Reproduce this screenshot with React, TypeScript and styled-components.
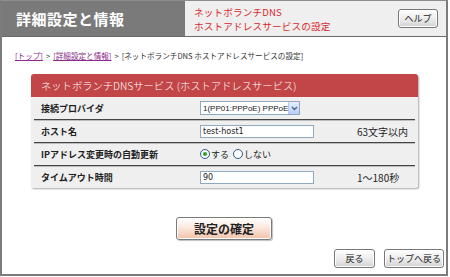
import React from 'react';
import styled, { createGlobalStyle } from 'styled-components';

const GlobalStyle = createGlobalStyle`
  html, body {
    margin: 0;
    padding: 0;
    background: #ffffff;
  }
  body {
    font-family: "Noto Sans CJK JP", "Noto Sans", sans-serif;
    color: #222;
  }
`;

const Frame = styled.div`
  box-sizing: border-box;
  width: 448px;
  height: 276px;
  border: 2px solid #7c7c7c;
  border-top: 1px solid #8c8c8c;
  display: flex;
  flex-direction: column;
  background: #fff;
`;

const Header = styled.div`
  display: flex;
  height: 35px;
  border-bottom: 1px solid #6a6a6a;
`;

const TitleBlock = styled.div`
  width: 183px;
  background: #7a7a7a;
  color: #fff;
  font-size: 15px;
  font-weight: bold;
  display: flex;
  align-items: center;
  padding-left: 14px;
  box-sizing: border-box;
  letter-spacing: 0.5px;
`;

const SubTitleBlock = styled.div`
  flex: 1;
  background: #efefef;
  display: flex;
  align-items: center;
  justify-content: space-between;
  padding: 0 8px 0 9px;
`;

const SubTitle = styled.div`
  color: #d8282c;
  font-size: 9.6px;
  letter-spacing: 0.15px;
  display: flex;
  flex-direction: column;
`;

const SubTitleLine = styled.span`
  line-height: 14px;
`;

const GrayButton = styled.button<{ $w: number }>`
  width: ${p => p.$w}px;
  height: 19px;
  padding: 0;
  border: 1px solid #777;
  border-radius: 3px;
  background: linear-gradient(#ffffff, #e4e4e4 70%, #cfcfcf);
  box-shadow: inset 0 0 0 1px #fff;
  font-family: "Noto Sans CJK JP", sans-serif;
  font-size: 9px;
  white-space: nowrap;
  color: #222;
  display: flex;
  align-items: center;
  justify-content: center;
`;

const Breadcrumb = styled.div`
  height: 37px;
  display: flex;
  align-items: center;
  padding-left: 13px;
  font-size: 7.6px;
  color: #333;
  gap: 3px;
  white-space: nowrap;
`;

const Crumb = styled.a`
  color: #8a2a8a;
  text-decoration: underline;
`;

const Panel = styled.div`
  margin-left: 29px;
  width: 387px;
  background: #efefef;
  border-radius: 3px 3px 2px 2px;
  box-shadow: 1px 1px 2px rgba(0, 0, 0, 0.35);
  overflow: hidden;
`;

const PanelHead = styled.div`
  height: 23px;
  background: #c24548;
  color: #fff;
  font-size: 10.3px;
  font-weight: 300;
  display: flex;
  align-items: center;
  padding-left: 10px;
`;

const Row = styled.div<{ $last?: boolean }>`
  display: grid;
  grid-template-columns: 166px 157px 1fr;
  align-items: center;
  height: 22px;
  border-bottom: ${p => (p.$last ? 'none' : '1px solid #444')};
  box-shadow: ${p => (p.$last ? 'none' : '0 1px 0 #bdbdbd')};
  margin: 0 3px;
`;

const Label = styled.div`
  font-size: 9px;
  font-weight: bold;
  padding-left: 7px;
  color: #222;
  white-space: nowrap;
`;

const Note = styled.div`
  font-size: 10px;
  color: #222;
`;

const TextField = styled.input`
  box-sizing: border-box;
  width: 114px;
  height: 13px;
  border: 1px solid #8fa9c2;
  background: #fff;
  font-family: "DejaVu Sans", sans-serif;
  font-size: 8px;
  padding: 0 2px;
  color: #222;
  outline: none;
`;

const SelectBox = styled.div`
  box-sizing: border-box;
  width: 100px;
  height: 14px;
  border: 1px solid #8fa9c2;
  background: #fff;
  display: flex;
  align-items: center;
  justify-content: space-between;
  font-family: "Liberation Sans", sans-serif;
  font-size: 8px;
  padding-left: 2px;
  white-space: nowrap;
`;

const SelectArrow = styled.span`
  width: 12px;
  height: 12px;
  background: linear-gradient(#e6eefc, #b9cdf5);
  border-left: 1px solid #b6c7e6;
  display: flex;
  align-items: center;
  justify-content: center;
`;

const RadioGroup = styled.div`
  display: flex;
  align-items: center;
  gap: 4px;
  font-size: 9px;
`;

const RadioItem = styled.label`
  display: flex;
  align-items: center;
  gap: 1px;
`;

const RadioDot = styled.span<{ $on?: boolean }>`
  box-sizing: border-box;
  width: 10px;
  height: 10px;
  border-radius: 50%;
  border: 1px solid #2c5a8c;
  background: #fff;
  display: flex;
  align-items: center;
  justify-content: center;
  &::after {
    content: '';
    width: 4px;
    height: 4px;
    border-radius: 50%;
    background: ${p => (p.$on ? '#2aa52a' : 'transparent')};
  }
`;

const ConfirmRow = styled.div`
  display: flex;
  justify-content: center;
  margin-top: 29px;
`;

const ConfirmButton = styled.button`
  width: 96px;
  height: 23px;
  border: 1px solid #7a7a7a;
  border-radius: 3px;
  background: linear-gradient(#ffffff, #fbe9df 45%, #f2c2a8);
  box-shadow: inset 0 0 0 1px #fff, 1px 1px 1px rgba(0, 0, 0, 0.25);
  font-family: "Noto Sans CJK JP", sans-serif;
  font-size: 12px;
  font-weight: bold;
  color: #222;
  padding: 0;
`;

const FooterRow = styled.div`
  display: flex;
  justify-content: flex-end;
  gap: 9px;
  margin-top: 9px;
  padding-right: 2px;
`;

const App: React.FC = () => {
  return (
    <>
      <GlobalStyle />
      <Frame>
        <Header>
          <TitleBlock>詳細設定と情報</TitleBlock>
          <SubTitleBlock>
            <SubTitle>
              <SubTitleLine>ネットボランチDNS</SubTitleLine>
              <SubTitleLine>ホストアドレスサービスの設定</SubTitleLine>
            </SubTitle>
            <GrayButton $w={40}>ヘルプ</GrayButton>
          </SubTitleBlock>
        </Header>
        <Breadcrumb>
          <Crumb>[トップ]</Crumb>
          <span>&gt;</span>
          <Crumb>[詳細設定と情報]</Crumb>
          <span>&gt;</span>
          <span>[ネットボランチDNS ホストアドレスサービスの設定]</span>
        </Breadcrumb>
        <Panel>
          <PanelHead>ネットボランチDNSサービス (ホストアドレスサービス)</PanelHead>
          <Row>
            <Label>接続プロバイダ</Label>
            <SelectBox>
              <span>1(PP01:PPPoE) PPPoE</span>
              <SelectArrow>
                <svg width="7" height="5" viewBox="0 0 7 5">
                  <path d="M1 1 L3.5 3.5 L6 1" stroke="#4d6185" strokeWidth="1.4" fill="none" />
                </svg>
              </SelectArrow>
            </SelectBox>
            <Note />
          </Row>
          <Row>
            <Label>ホスト名</Label>
            <TextField defaultValue="test-host1" />
            <Note>63文字以内</Note>
          </Row>
          <Row>
            <Label>IPアドレス変更時の自動更新</Label>
            <RadioGroup>
              <RadioItem>
                <RadioDot $on />
                する
              </RadioItem>
              <RadioItem>
                <RadioDot />
                しない
              </RadioItem>
            </RadioGroup>
            <Note />
          </Row>
          <Row $last>
            <Label>タイムアウト時間</Label>
            <TextField defaultValue="90" />
            <Note>1～180秒</Note>
          </Row>
        </Panel>
        <ConfirmRow>
          <ConfirmButton>設定の確定</ConfirmButton>
        </ConfirmRow>
        <FooterRow>
          <GrayButton $w={41}>戻る</GrayButton>
          <GrayButton $w={60}>トップへ戻る</GrayButton>
        </FooterRow>
      </Frame>
    </>
  );
};

export default App;
